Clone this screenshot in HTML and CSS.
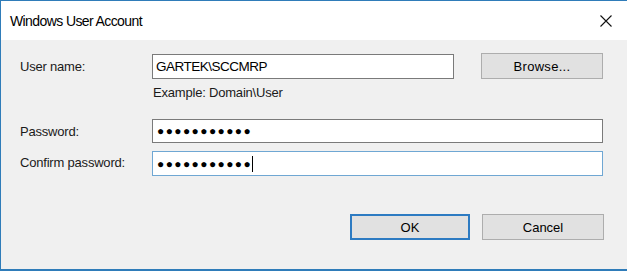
FILE: index.html
```html
<!DOCTYPE html>
<html>
<head>
<meta charset="utf-8">
<link rel="stylesheet" href="styles.css">
</head>
<body>
<div class="window">
  <div class="titlebar">
    <span class="title">Windows User Account</span>
    <svg class="close" width="12" height="12" viewBox="0 0 12 12"><path d="M0.5 0.5 L11.5 11.5 M11.5 0.5 L0.5 11.5" stroke="#111" stroke-width="1.1" fill="none"/></svg>
  </div>
  <div class="content">
    <div class="form">
      <label class="lbl">User name:</label>
      <div class="input short">GARTEK\SCCMRP</div>
      <button class="btn browse">Browse...</button>
      <div class="example">Example: Domain\User</div>
      <label class="lbl pw">Password:</label>
      <div class="input wide pw dots">●●●●●●●●●●●</div>
      <label class="lbl cf">Confirm password:</label>
      <div class="input wide cf dots focused">●●●●●●●●●●●<span class="caret"></span></div>
    </div>
    <div class="actions">
      <button class="btn ok">OK</button>
      <button class="btn">Cancel</button>
    </div>
  </div>
</div>
</body>
</html>
```
FILE: styles.css
```css
html, body { margin: 0; padding: 0; }
body { width: 627px; height: 271px; overflow: hidden; font-family: "Liberation Sans", Arial, sans-serif; }
.window {
  box-sizing: border-box; width: 627px; height: 271px;
  border-left: 1px solid #2f7cb9; border-top: 1px solid #2f7cb9; border-bottom: 2px solid #2f7cb9;
  background: #f0f0f0; display: flex; flex-direction: column;
}
.titlebar {
  height: 39px; background: #fff; display: flex; align-items: center; justify-content: space-between;
  padding: 0 15px 0 9px;
}
.title { font-size: 14px; letter-spacing: -0.6px; color: #000; }
.close { display: block; margin-top: 1px; }
.content { flex: 1; display: flex; flex-direction: column; padding: 13px 23px 0 19px; }
.form {
  display: grid; grid-template-columns: 132px 302px 27px 122px;
  grid-template-rows: 26px 40px 24px 33px; row-gap: 0;
  font-size: 13px; color: #000;
}
.lbl { align-self: center; color: #1a1a1a; font-size: 13px; letter-spacing: -0.2px; }
.input {
  box-sizing: border-box; background: #fff; border: 1px solid #7a7a7a;
  display: flex; align-items: center; padding: 0 3px; font-size: 13.5px; letter-spacing: -0.5px; color: #000;
}
.short { grid-column: 2; grid-row: 1; height: 25px; margin-top: 1px; }
.browse { grid-column: 4; grid-row: 1; height: 26px; }
.example { grid-column: 2; grid-row: 2; padding: 6px 0 0 1px; font-size: 13px; letter-spacing: -0.2px; color: #1a1a1a; }
.lbl.pw { grid-row: 3; }
.input.pw { grid-row: 3; height: 24px; padding-left: 4px; }
.lbl.cf { grid-row: 4; align-self: start; padding-top: 12px; }
.input.cf { grid-row: 4; height: 25px; margin-top: 8px; padding-left: 4px; }
.wide { grid-column: 2 / 5; }
.dots { font-size: 12px; letter-spacing: 1.4px; }
.focused { border-color: #6fa7d3; }
.caret { display: inline-block; width: 1px; height: 16px; background: #000; margin-left: 0; }
.actions { display: flex; justify-content: flex-end; gap: 12px; margin-top: 38px; }
.btn {
  box-sizing: border-box; width: 122px; height: 26px; background: #e1e1e1; border: 1px solid #adadad;
  font-family: "Liberation Sans", Arial, sans-serif; font-size: 13px; color: #000; padding: 0; margin: 0;
}
.btn.browse { letter-spacing: 0.3px; }
.btn.ok { width: 120px; border: 2px solid #2d7bc2; }
```
